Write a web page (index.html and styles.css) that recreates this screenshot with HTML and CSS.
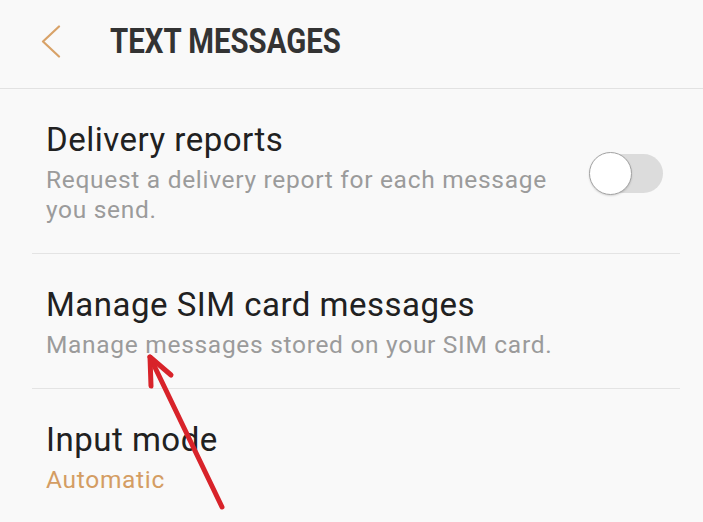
FILE: index.html
```html
<!DOCTYPE html>
<html lang="en">
<head>
    <meta charset="UTF-8">
    <meta name="viewport" content="width=device-width, initial-scale=1.0">
    <title>Text messages</title>
    <link rel="stylesheet" href="styles.css">
</head>
<body>

    <!-- Top bar with back button -->
    <header class="app-bar">
        <button class="back-btn" aria-label="Back">
            <svg width="20" height="34" viewBox="0 0 20 34">
                <polyline points="18,1.5 2,16.5 18,31.5" fill="none" stroke="#d8a268" stroke-width="2.2" stroke-linecap="round" stroke-linejoin="round"/>
            </svg>
        </button>
        <h1 class="app-title"><span>TEXT MESSAGES</span></h1>
    </header>

    <!-- Settings list -->
    <main class="settings">
        <div class="setting">
            <div class="setting-text">
                <div class="setting-title">Delivery reports</div>
                <div class="setting-desc">Request a delivery report for each message you send.</div>
            </div>
            <div class="switch">
                <span class="switch-thumb"></span>
            </div>
        </div>
        <div class="divider"></div>

        <div class="setting">
            <div class="setting-text">
                <div class="setting-title">Manage SIM card messages</div>
                <div class="setting-desc">Manage messages stored on your SIM card.</div>
            </div>
        </div>
        <div class="divider"></div>

        <div class="setting">
            <div class="setting-text">
                <div class="setting-title">Input mode</div>
                <div class="setting-desc value">Automatic</div>
            </div>
        </div>
    </main>

    <!-- Hand-drawn pointer on top of the list -->
    <svg class="pointer" width="703" height="522" viewBox="0 0 703 522">
        <g fill="none" stroke="#d8232a" stroke-width="5" stroke-linecap="round" stroke-linejoin="round">
            <line x1="222" y1="507" x2="150" y2="357"/>
            <polyline points="151,386 150,357 171,375"/>
        </g>
    </svg>

</body>
</html>
```

FILE: styles.css
```css
body {
    margin: 0;
    background-color: #f9f9f9;
    font-family: Roboto, "Noto Sans", sans-serif;
    color: #212121;
    position: relative;
    min-height: 522px;
    overflow: hidden;
}
.app-bar {
    display: flex;
    align-items: center;
    height: 84px;
    padding-bottom: 4px;
    border-bottom: 1px solid #e2e2e2;
}
.back-btn {
    display: flex;
    background: none;
    border: none;
    padding: 0;
    margin-left: 41px;
    width: 20px;
    height: 34px;
}
.app-title {
    margin: 0 0 0 49px;
    font-size: 35px;
    font-weight: 700;
    color: #333333;
    line-height: 40px;
}
.app-title span {
    display: inline-block;
    transform: scaleX(0.84);
    transform-origin: left center;
}
.settings {
    display: flex;
    flex-direction: column;
}
.setting {
    display: flex;
    align-items: center;
    padding: 32px 40px 28px 46px;
}
.setting-text {
    flex: 1;
    max-width: 523px;
}
.setting-title {
    font-size: 33px;
    line-height: 38px;
    letter-spacing: 0.5px;
    color: #212121;
}
.setting-desc {
    margin-top: 6px;
    font-size: 24.5px;
    line-height: 30px;
    letter-spacing: 0.7px;
    color: #9b9b9b;
}
.setting-desc.value {
    color: #d49d63;
}
.divider {
    height: 1px;
    margin: 0 23px 0 32px;
    background-color: #e4e4e4;
}
.switch {
    position: relative;
    width: 66px;
    height: 39px;
    margin-left: auto;
    border-radius: 20px;
    background-color: #dcdcdc;
}
.switch-thumb {
    position: absolute;
    left: -8px;
    top: -2px;
    width: 41px;
    height: 41px;
    border-radius: 50%;
    background-color: #ffffff;
    border: 1px solid #a3a3a3;
    box-shadow: 0 1px 2px rgba(0, 0, 0, 0.15);
}
.pointer {
    position: absolute;
    left: 0;
    top: 0;
    pointer-events: none;
}
```
